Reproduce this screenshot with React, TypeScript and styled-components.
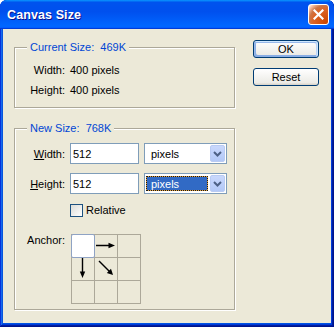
import React from 'react';
import styled, { createGlobalStyle } from 'styled-components';

const Global = createGlobalStyle`
  html, body { margin: 0; padding: 0; background: #ffffff; }
  body { font-family: "Liberation Sans", Arial, sans-serif; font-size: 11px; color: #000; }
`;

const Window = styled.div`
  width: 334px;
  height: 327px;
  box-sizing: border-box;
  display: flex;
  flex-direction: column;
  background: #0054e3;
  border-radius: 7px 7px 0 0;
  overflow: hidden;
  box-shadow: inset -1px -1px #00138c, inset 1px 1px #0831d9, inset -2px -2px #001ea0,
    inset 2px 2px #166aee, inset -3px -3px #003bda, inset 3px 3px #0855dd;
`;

const TitleBar = styled.div`
  height: 29px;
  flex: none;
  display: flex;
  align-items: center;
  justify-content: space-between;
  padding: 0 5px 0 7px;
  background: linear-gradient(180deg, #0997ff, #0053ee 8%, #0050ee 40%, #0066ff 88%, #0066ff 93%, #005bff 95%, #003dd7 96%, #003dd7);
`;

const Title = styled.span`
  color: #fff;
  font-weight: bold;
  font-size: 12.5px;
  letter-spacing: 0.1px;
  text-shadow: 1px 1px #0f1089;
`;

const CloseButton = styled.div`
  width: 21px;
  height: 21px;
  box-sizing: border-box;
  border: 1px solid #fff;
  border-radius: 3px;
  background: radial-gradient(circle at 90% 90%, #cc4600 0%, #dc6527 55%, #cd7546 70%, #ffccb2 90%, #fff 100%);
  display: flex;
  align-items: center;
  justify-content: center;
`;

const Client = styled.div`
  flex: 1;
  margin: 0 3px 4px;
  background: #ece9d8;
  display: flex;
`;

const LeftColumn = styled.div`
  padding: 18px 0 0 11px;
  display: flex;
  flex-direction: column;
  gap: 20px;
`;

const RightColumn = styled.div`
  margin-left: auto;
  padding: 11px 12px 0 0;
  display: flex;
  flex-direction: column;
  gap: 10px;
`;

const Group = styled.div<{ $h: number }>`
  position: relative;
  box-sizing: border-box;
  width: 221px;
  height: ${(p) => p.$h}px;
  border: 1px solid #aca899;
  box-shadow: 1px 1px 0 #fff, inset 1px 1px 0 #fff;
`;

const Legend = styled.span`
  position: absolute;
  top: -7px;
  left: 12px;
  padding: 0 3px;
  background: #ece9d8;
  color: #0046d5;
  line-height: 13px;
  white-space: pre;
`;

const InfoGrid = styled.div`
  display: grid;
  grid-template-columns: 50px auto;
  column-gap: 5px;
  padding-top: 12px;
  line-height: 20px;
`;

const Label = styled.span`
  justify-self: end;
  white-space: nowrap;
`;

const FormGrid = styled.div`
  display: grid;
  grid-template-columns: 50px auto;
  column-gap: 5px;
  padding-top: 14px;
  align-items: center;
`;

const FieldLabel = styled.span<{ $gap?: number }>`
  justify-self: end;
  white-space: nowrap;
  margin-top: ${(p) => p.$gap ?? 0}px;
`;

const Controls = styled.div<{ $gap?: number }>`
  display: flex;
  gap: 5px;
  margin-top: ${(p) => p.$gap ?? 0}px;
`;

const TextBox = styled.div`
  width: 69px;
  height: 21px;
  box-sizing: border-box;
  border: 1px solid #7f9db9;
  background: #fff;
  padding-left: 2px;
  display: flex;
  align-items: center;
`;

const Select = styled.div`
  width: 83px;
  height: 21px;
  box-sizing: border-box;
  border: 1px solid #7f9db9;
  background: #fff;
  padding: 1px;
  display: flex;
`;

const SelectValue = styled.span<{ $selected?: boolean }>`
  flex: 1;
  display: flex;
  align-items: center;
  box-sizing: border-box;
  margin: ${(p) => (p.$selected ? '1px 2px 1px 0' : '0')};
  padding-left: ${(p) => (p.$selected ? '4px' : '4px')};
  color: ${(p) => (p.$selected ? '#fff' : '#000')};
  border: 1px ${(p) => (p.$selected ? 'dotted #1a1a1a' : 'solid transparent')};
  background: ${(p) =>
    p.$selected ? 'linear-gradient(#316ac5, #316ac5) padding-box, #e0a040 border-box' : 'transparent'};
`;

const DropButton = styled.span`
  width: 15px;
  box-sizing: border-box;
  border-radius: 2px;
  border: 1px solid #b9cbf3;
  background: linear-gradient(180deg, #c9d8fc 0%, #bccffa 60%, #b3c8f6 100%);
  display: flex;
  align-items: center;
  justify-content: center;
`;

const CheckRow = styled.div`
  grid-column: 2;
  display: flex;
  align-items: center;
  gap: 3px;
  margin-top: 9px;
  height: 14px;
`;

const CheckBox = styled.span`
  width: 13px;
  height: 13px;
  box-sizing: border-box;
  border: 1px solid #1c5180;
  background: linear-gradient(135deg, #dcdcd7, #ffffff);
`;

const AnchorLabel = styled.span`
  justify-self: end;
  align-self: start;
  margin-top: 17px;
  line-height: 13px;
`;

const AnchorGrid = styled.div`
  margin-top: 17px;
  margin-left: 1px;
  display: grid;
  grid-template-columns: repeat(3, 22px);
  grid-auto-rows: 22px;
  gap: 1px;
  padding: 1px;
  width: fit-content;
  background: #aca899;
`;

const AnchorCell = styled.div<{ $active?: boolean }>`
  background: ${(p) => (p.$active ? '#fff' : '#ece9d8')};
  margin: ${(p) => (p.$active ? '-1px' : '0')};
  border: ${(p) => (p.$active ? '1px solid #8fa3c4' : 'none')};
  border-radius: ${(p) => (p.$active ? '2px' : '0')};
  display: flex;
  align-items: center;
  justify-content: center;
`;

const Button = styled.div<{ $default?: boolean }>`
  width: 66px;
  height: 18px;
  box-sizing: border-box;
  border: 1px solid #003c74;
  border-radius: 3px;
  background: linear-gradient(180deg, #fff, #ecebe6 86%, #d6d0c5);
  display: flex;
  align-items: center;
  justify-content: center;
  font-size: 11px;
  box-shadow: ${(p) =>
    p.$default
      ? 'inset -1px 1px #cee7ff, inset 1px 2px #98b8ea, inset -2px 2px #bcd4f6, inset 1px -1px #89ade4, inset 2px -2px #89ade4'
      : 'none'};
`;

const Chevron = () => (
  <svg width="9" height="6" viewBox="0 0 9 6">
    <path d="M1 1 L4.5 4.5 L8 1" fill="none" stroke="#4d6185" strokeWidth="2" />
  </svg>
);

const ArrowRight = () => (
  <svg width="22" height="22" viewBox="0 0 22 22">
    <line x1="1" y1="10.5" x2="15" y2="10.5" stroke="#000" strokeWidth="1.4" />
    <polygon points="13.5,7.8 20,10.5 13.5,13.2" fill="#000" />
  </svg>
);

const ArrowDown = () => (
  <svg width="22" height="22" viewBox="0 0 22 22">
    <line x1="10.5" y1="0" x2="10.5" y2="15" stroke="#000" strokeWidth="1.4" />
    <polygon points="7.8,13.5 10.5,20 13.2,13.5" fill="#000" />
  </svg>
);

const ArrowDiag = () => (
  <svg width="22" height="22" viewBox="0 0 22 22">
    <line x1="4" y1="3" x2="14.5" y2="13.5" stroke="#000" strokeWidth="1.4" />
    <polygon points="18,17 11.8,15 16,10.8" fill="#000" />
  </svg>
);

export default function App() {
  return (
    <>
      <Global />
      <Window>
        <TitleBar>
          <Title>Canvas Size</Title>
          <CloseButton>
            <svg width="11" height="11" viewBox="0 0 11 11">
              <path d="M1.5 1.5 L9.5 9.5 M9.5 1.5 L1.5 9.5" stroke="#fff" strokeWidth="2.2" strokeLinecap="square" />
            </svg>
          </CloseButton>
        </TitleBar>
        <Client>
          <LeftColumn>
            <Group $h={61}>
              <Legend>{'Current Size:  469K'}</Legend>
              <InfoGrid>
                <Label>Width:</Label>
                <span>400 pixels</span>
                <Label>Height:</Label>
                <span>400 pixels</span>
              </InfoGrid>
            </Group>
            <Group $h={182}>
              <Legend>{'New Size:  768K'}</Legend>
              <FormGrid>
                <FieldLabel>
                  <u>W</u>idth:
                </FieldLabel>
                <Controls>
                  <TextBox>512</TextBox>
                  <Select>
                    <SelectValue>pixels</SelectValue>
                    <DropButton>
                      <Chevron />
                    </DropButton>
                  </Select>
                </Controls>
                <FieldLabel $gap={9}>
                  <u>H</u>eight:
                </FieldLabel>
                <Controls $gap={9}>
                  <TextBox>512</TextBox>
                  <Select>
                    <SelectValue $selected>pixels</SelectValue>
                    <DropButton>
                      <Chevron />
                    </DropButton>
                  </Select>
                </Controls>
                <CheckRow>
                  <CheckBox />
                  <span>Relative</span>
                </CheckRow>
                <AnchorLabel>Anchor:</AnchorLabel>
                <AnchorGrid>
                  <AnchorCell $active />
                  <AnchorCell>
                    <ArrowRight />
                  </AnchorCell>
                  <AnchorCell />
                  <AnchorCell>
                    <ArrowDown />
                  </AnchorCell>
                  <AnchorCell>
                    <ArrowDiag />
                  </AnchorCell>
                  <AnchorCell />
                  <AnchorCell />
                  <AnchorCell />
                  <AnchorCell />
                </AnchorGrid>
              </FormGrid>
            </Group>
          </LeftColumn>
          <RightColumn>
            <Button $default>OK</Button>
            <Button>Reset</Button>
          </RightColumn>
        </Client>
      </Window>
    </>
  );
}
